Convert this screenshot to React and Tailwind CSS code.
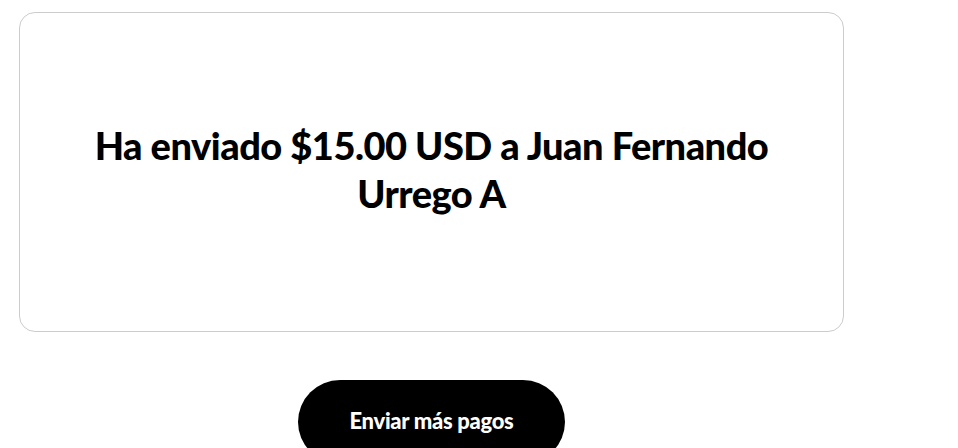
export default function App() {
  return (
    <div
      className="min-h-screen bg-white pt-[12px] pl-[19px]"
      style={{ fontFamily: 'Lato, "Noto Sans", sans-serif' }}
    >
      <div className="w-[825px]">
        <div className="flex h-[320px] items-center justify-center rounded-[16px] border border-[#cccccc] px-10">
          <h1 className="max-w-[720px] pb-[6px] text-center text-[38px] font-black leading-[48px] tracking-[-0.5px] text-black">
            Ha enviado $15.00 USD a Juan Fernando Urrego A
          </h1>
        </div>
        <div className="mt-[48px] flex justify-center">
          <button className="h-[84px] w-[267px] rounded-full bg-black pb-[4px] text-[22px] font-black tracking-[-0.3px] text-white">
            Enviar más pagos
          </button>
        </div>
      </div>
    </div>
  );
}
